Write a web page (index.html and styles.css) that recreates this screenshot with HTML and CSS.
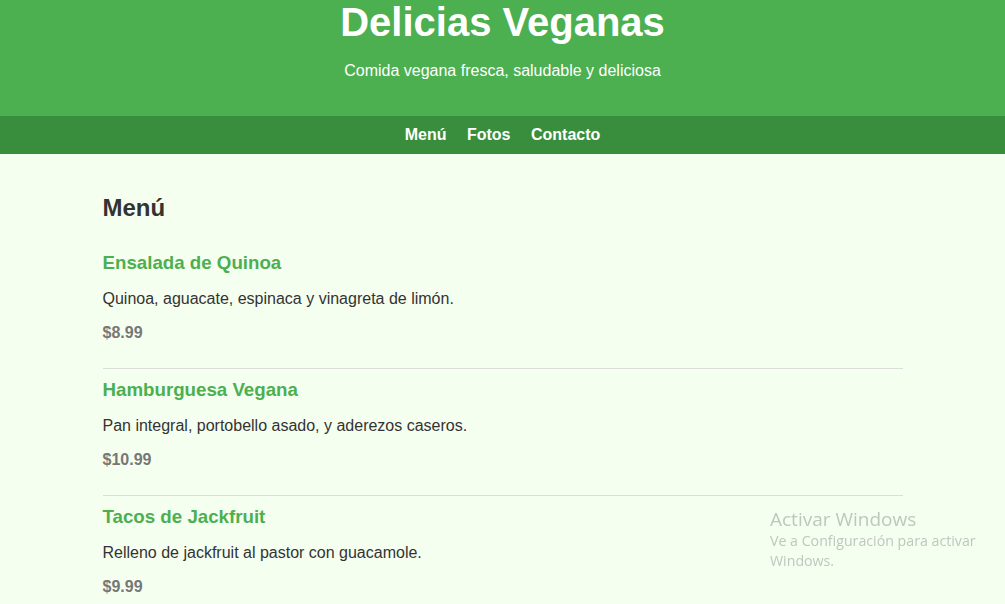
FILE: index.html
```html
<!DOCTYPE html>
<html lang="es">
<head>
<meta charset="utf-8">
<title>Delicias Veganas</title>
<link rel="stylesheet" href="styles.css">
</head>
<body>
<header class="site-header">
  <h1 class="site-title">Delicias Veganas</h1>
  <p class="site-tagline">Comida vegana fresca, saludable y deliciosa</p>
</header>
<nav class="site-nav">
  <a href="#menu">Menú</a>
  <a href="#fotos">Fotos</a>
  <a href="#contacto">Contacto</a>
</nav>
<main class="content">
  <section id="menu" class="menu">
    <h2 class="section-title">Menú</h2>
    <div class="menu-item">
      <h3 class="item-name">Ensalada de Quinoa</h3>
      <p class="item-desc">Quinoa, aguacate, espinaca y vinagreta de limón.</p>
      <p class="item-price">$8.99</p>
    </div>
    <div class="menu-item">
      <h3 class="item-name">Hamburguesa Vegana</h3>
      <p class="item-desc">Pan integral, portobello asado, y aderezos caseros.</p>
      <p class="item-price">$10.99</p>
    </div>
    <div class="menu-item">
      <h3 class="item-name">Tacos de Jackfruit</h3>
      <p class="item-desc">Relleno de jackfruit al pastor con guacamole.</p>
      <p class="item-price">$9.99</p>
    </div>
  </section>
</main>
<div class="win-watermark">
  <div class="win-title">Activar Windows</div>
  <div class="win-sub">Ve a Configuración para activar<br>Windows.</div>
</div>
</body>
</html>
```

FILE: styles.css
```css
html, body {
  margin: 0;
  padding: 0;
}
body {
  font-family: "Liberation Sans", Arial, sans-serif;
  font-size: 16px;
  background: #f5fff0;
  color: #333333;
}
.site-header {
  background: #4caf50;
  color: #ffffff;
  text-align: center;
  padding: 0 0 20px;
}
.site-title {
  margin: 0;
  font-size: 40px;
}
.site-tagline {
  margin: 17px 0 16px;
}
.site-nav {
  background: #388e3c;
  text-align: center;
  padding: 10px 0;
}
.site-nav a {
  color: #ffffff;
  text-decoration: none;
  font-weight: bold;
  margin: 0 8px;
}
.content {
  max-width: 800px;
  margin: 0 auto;
  padding: 20px 0;
}
.section-title {
  font-size: 24px;
  margin: 20px 0 20px;
  color: #333333;
}
.menu-item {
  padding: 10px 0 26px;
  border-bottom: 1px solid #dddddd;
}
.item-name {
  font-size: 18.72px;
  line-height: 22px;
  color: #4caf50;
  margin: 0 0 16px;
}
.item-desc {
  margin: 0 0 16px;
  line-height: 18px;
}
.item-price {
  margin: 0;
  line-height: 18px;
  font-weight: bold;
  color: #777777;
}
.win-watermark {
  position: fixed;
  left: 770px;
  top: 507px;
  color: rgba(140, 140, 140, 0.5);
  font-family: "Open Sans", "DejaVu Sans", sans-serif;
  pointer-events: none;
}
.win-title {
  font-size: 19px;
  line-height: 24px;
}
.win-sub {
  font-size: 14.2px;
  line-height: 20px;
}
```
